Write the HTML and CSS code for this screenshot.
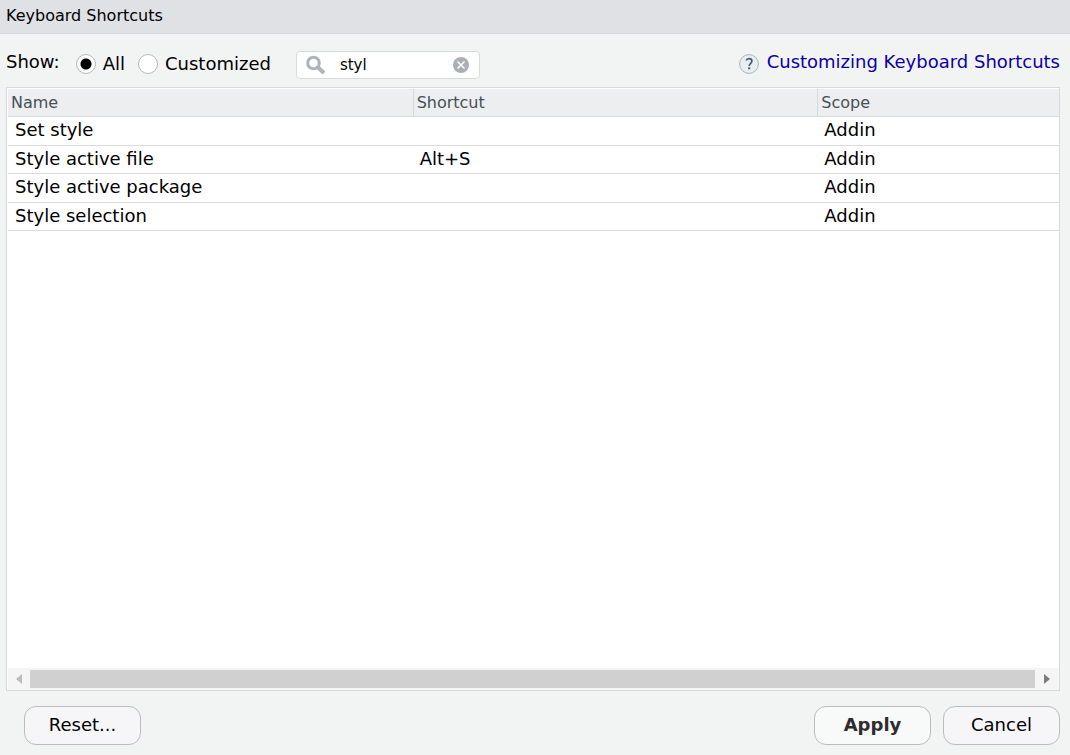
FILE: index.html
```html
<!DOCTYPE html>
<html lang="en">
<head>
<meta charset="utf-8">
<title>Keyboard Shortcuts</title>
<link rel="stylesheet" href="styles.css">
</head>
<body>
<form class="dialog">
  <h1 class="caption">Keyboard Shortcuts</h1>
  <div class="toolbar">
    <span class="show">Show:</span>
    <div class="filters">
      <input class="radio" type="radio" name="show" id="all" checked><label class="radio-label" for="all">All</label>
      <input class="radio" type="radio" name="show" id="customized"><label class="radio-label" for="customized">Customized</label>
    </div>
    <div class="search">
      <svg class="lens" viewBox="0 0 20 20" aria-hidden="true"><circle cx="7.500" cy="8" r="5.800" fill="none" stroke="#acb4b8" stroke-width="3"/><path d="M11.800 12.300L18 18" stroke="#acb4b8" stroke-width="4"/></svg>
      <input class="query" type="text" aria-label="Filter shortcuts" value="styl">
      <button class="clear" type="button" aria-label="Clear"><svg viewBox="0 0 16 16"><circle cx="8" cy="8" r="8" fill="#a9b0b4"/><path d="M4.5 4.5l7 7M11.5 4.5l-7 7" stroke="#fff" stroke-width="1.6"/></svg></button>
    </div>
    <a class="help" href="#help">
      <svg class="help-icon" viewBox="0 0 20 20" aria-hidden="true"><circle cx="10" cy="10" r="9.4" fill="#e9eef0" stroke="#a5b5bc" stroke-width="1"/><path d="M7.200 6.600C7.600 5.300 8.700 4.700 10 4.700c1.700 0 2.900.9 2.900 2.400 0 2.200-2.700 2.300-2.700 5" fill="none" stroke="#4a5c65" stroke-width="1.700"/><rect x="9.200" y="13.300" width="2" height="2" fill="#4a5c65"/></svg>
      <span>Customizing Keyboard Shortcuts</span>
    </a>
  </div>
  <div class="panel">
    <table class="grid">
      <thead><tr><th class="name">Name</th><th>Shortcut</th><th class="scope">Scope</th></tr></thead>
      <tbody>
        <tr><td>Set style</td><td></td><td>Addin</td></tr>
        <tr><td>Style active file</td><td>Alt+S</td><td>Addin</td></tr>
        <tr><td>Style active package</td><td></td><td>Addin</td></tr>
        <tr><td>Style selection</td><td></td><td>Addin</td></tr>
      </tbody>
    </table>
    <div class="scrollbar">
      <button class="arrow" type="button" aria-label="Scroll left"><svg viewBox="0 0 6 10"><path d="M6 0v10L0 5z" fill="#bcbcbc"/></svg></button>
      <div class="thumb"></div>
      <button class="arrow next" type="button" aria-label="Scroll right"><svg viewBox="0 0 6 10"><path d="M0 0v10l6-5z" fill="#7c7c7c"/></svg></button>
    </div>
  </div>
  <div class="footer">
    <button class="btn reset" type="button">Reset...</button>
    <button class="btn apply" type="button">Apply</button>
    <button class="btn" type="button">Cancel</button>
  </div>
</form>
</body>
</html>
```
FILE: styles.css
```css
* { box-sizing: border-box; }
body {
  margin: 0;
  background: #f2f4f4;
  color: #000;
  font: 18px/24px "DejaVu Sans", sans-serif;
}
svg { display: block; }
button, input { font: inherit; color: inherit; }
.dialog { display: flex; flex-direction: column; min-height: 100vh; }
.caption {
  margin: 0;
  padding: 4px 6px 5px;
  background: #e0e1e5;
  border-bottom: 1px solid #d5d7da;
  font-size: 16px;
  font-weight: normal;
}
.toolbar { display: flex; align-items: flex-start; padding: 16px 10px 8px 6px; }
.show { margin-right: 16px; }
.filters { display: flex; align-items: center; padding-top: 2px; }
.radio {
  appearance: none;
  width: 20px;
  height: 20px;
  margin: 0;
  border: 1px solid #b8b8b8;
  border-radius: 50%;
  background: #fff;
}
.radio:checked { background: radial-gradient(circle, #000 0 5px, #fff 6px); }
.radio-label { padding: 0 13px 0 7px; }
.search {
  display: flex;
  align-items: center;
  width: 184px;
  height: 28px;
  margin: 1px 12px 0;
  padding: 0 10px 0 9px;
  background: #fff;
  border: 1px solid #d6dadc;
  border-radius: 4px;
}
.lens { flex: none; width: 20px; height: 20px; }
.query {
  flex: 1;
  min-width: 0;
  margin-left: 14px;
  padding: 0;
  border: 0;
  outline: 0;
  background: none;
  font-size: 15px;
}
.clear { flex: none; width: 16px; height: 16px; padding: 0; border: 0; background: none; }
.help { display: flex; margin-left: auto; color: #0b00a8; text-decoration: none; }
.help-icon { width: 20px; height: 20px; margin: 4px 8px 0 0; }
.panel {
  display: flex;
  flex: 1;
  flex-direction: column;
  margin: 0 10px 0 6px;
  padding: 1px 0 0 1px;
  background: #fff;
  border: 1px solid #d6dadc;
}
.grid { width: 100%; border-collapse: separate; border-spacing: 0; table-layout: fixed; }
.grid th {
  height: 28px;
  padding: 0 3px;
  background: #edeef0;
  border-bottom: 1px solid #d6dadc;
  border-left: 1px solid #d6dadc;
  color: #475057;
  font-size: 16px;
  font-weight: normal;
  text-align: left;
}
.grid .name { width: 38.5%; border-left: 0; }
.grid .scope { width: 23%; }
.grid td { height: 28px; padding: 0 7px 2px; border-bottom: 1px solid #dcdcdc; line-height: 20px; }
.grid tr:nth-child(odd) td { height: 29px; }
.scrollbar { display: flex; height: 22px; margin-top: auto; padding: 2px 0; background: #f5f5f5; }
.arrow {
  display: flex;
  align-items: center;
  justify-content: center;
  width: 22px;
  padding: 0;
  border: 0;
  background: none;
}
.arrow svg { width: 6px; height: 10px; }
.next { width: 24px; }
.thumb { flex: 1; background: #d0d0d0; }
.footer { display: flex; gap: 12px; padding: 15px 10px 10px 24px; }
.btn {
  width: 117px;
  height: 39px;
  padding: 0 0 2px;
  background: #f6f6f9;
  border: 1px solid #bbb;
  border-radius: 12px;
}
.reset { margin-right: auto; }
.apply { background: #f8f9f9; color: #2d2d2d; font-weight: bold; }
```
